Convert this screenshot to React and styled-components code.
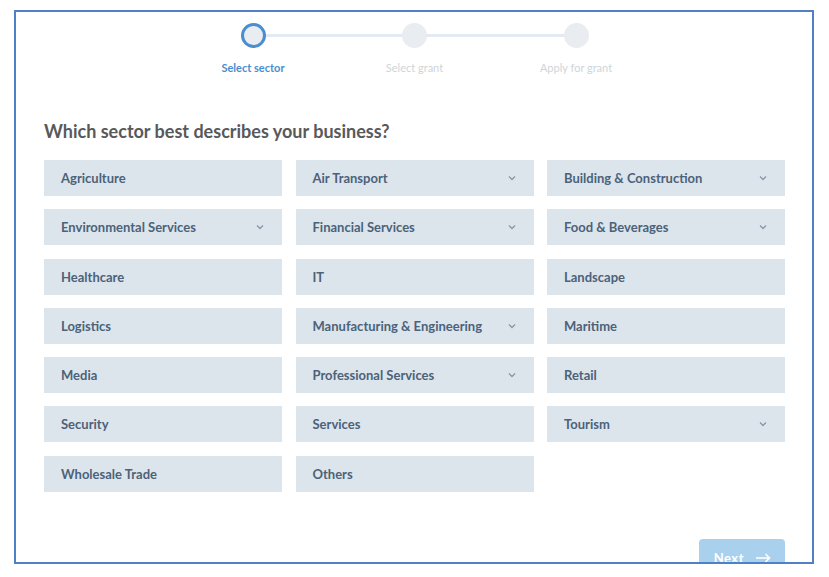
import React from 'react';
import styled, { createGlobalStyle } from 'styled-components';

const GlobalStyle = createGlobalStyle`
  body {
    margin: 0;
    background: #fff;
    font-family: Lato, "Liberation Sans", sans-serif;
  }
`;

// sectors, with a flag for the ones that open a sub-list
const SECTORS = [
  { name: 'Agriculture' },
  { name: 'Air Transport', sub: true },
  { name: 'Building & Construction', sub: true },
  { name: 'Environmental Services', sub: true },
  { name: 'Financial Services', sub: true },
  { name: 'Food & Beverages', sub: true },
  { name: 'Healthcare' },
  { name: 'IT' },
  { name: 'Landscape' },
  { name: 'Logistics' },
  { name: 'Manufacturing & Engineering', sub: true },
  { name: 'Maritime' },
  { name: 'Media' },
  { name: 'Professional Services', sub: true },
  { name: 'Retail' },
  { name: 'Security' },
  { name: 'Services' },
  { name: 'Tourism', sub: true },
  { name: 'Wholesale Trade' },
  { name: 'Others' },
];

const STEPS = ['Select sector', 'Select grant', 'Apply for grant'];

const Frame = styled.div`
  box-sizing: border-box;
  margin: 10px 0 0 14px;
  width: 800px;
  height: 554px;
  border: 2px solid #4f81c7;
  overflow: hidden;
  padding: 11px 27px 0 28px;
`;

const Stepper = styled.ol`
  display: flex;
  justify-content: center;
  list-style: none;
  margin: 0;
  padding: 0;
`;

const Step = styled.li`
  position: relative;
  width: 161.5px;
  display: flex;
  flex-direction: column;
  align-items: center;

  &:not(:last-child)::after {
    content: '';
    position: absolute;
    top: 11px;
    left: 50%;
    width: 100%;
    height: 3px;
    background: #e3eaf1;
  }
`;

const Dot = styled.span`
  position: relative;
  z-index: 1;
  box-sizing: border-box;
  width: 25px;
  height: 25px;
  border-radius: 50%;
  background: #e9ecf0;
  border: 3px solid ${(p) => (p.$active ? '#4a8ed0' : '#e9ecf0')};
`;

const StepLabel = styled.span`
  margin-top: 13px;
  font-size: 11px;
  font-weight: ${(p) => (p.$active ? 700 : 400)};
  color: ${(p) => (p.$active ? '#4a8ed0' : '#d0d4d9')};
`;

const Title = styled.h2`
  margin: 46px 0 18px;
  font-size: 18px;
  font-weight: 700;
  color: #58595b;
`;

const Grid = styled.div`
  display: grid;
  grid-template-columns: repeat(3, 238px);
  column-gap: 13.5px;
  row-gap: 13.3px;
`;

const Option = styled.button`
  display: flex;
  align-items: center;
  justify-content: space-between;
  height: 36px;
  padding: 0 17px 0 17px;
  border: none;
  background: #dde5ec;
  color: #4b6279;
  font-family: inherit;
  font-size: 13px;
  font-weight: 700;
  text-align: left;
  cursor: pointer;
`;

const Chevron = styled.svg`
  width: 10px;
  height: 10px;
  stroke: #8797a8;
  fill: none;
  stroke-width: 1.3;
`;

const Footer = styled.div`
  display: flex;
  justify-content: flex-end;
  margin-top: 47px;
`;

const NextButton = styled.button`
  display: flex;
  align-items: center;
  gap: 12px;
  height: 38px;
  padding: 0 14px 0 15px;
  border: none;
  border-radius: 4px;
  background: #a9d1ee;
  color: #fff;
  font-family: inherit;
  font-size: 13px;
  font-weight: 700;
  letter-spacing: 0.5px;
`;

function Arrow() {
  return (
    <svg width="15" height="10" viewBox="0 0 15 10" fill="none" stroke="#fff" strokeWidth="1.6">
      <path d="M0 5h13.5M9.5 1l4 4-4 4" />
    </svg>
  );
}

export default function App() {
  return (
    <>
      <GlobalStyle />
      <Frame>
        <Stepper>
          {STEPS.map((label, i) => (
            <Step key={label}>
              <Dot $active={i === 0} />
              <StepLabel $active={i === 0}>{label}</StepLabel>
            </Step>
          ))}
        </Stepper>

        <Title>Which sector best describes your business?</Title>

        <Grid>
          {SECTORS.map((s) => (
            <Option key={s.name}>
              <span>{s.name}</span>
              {s.sub && (
                <Chevron viewBox="0 0 10 10">
                  <path d="M2 3.5l3 3 3-3" />
                </Chevron>
              )}
            </Option>
          ))}
        </Grid>

        <Footer>
          <NextButton>
            Next
            <Arrow />
          </NextButton>
        </Footer>
      </Frame>
    </>
  );
}
